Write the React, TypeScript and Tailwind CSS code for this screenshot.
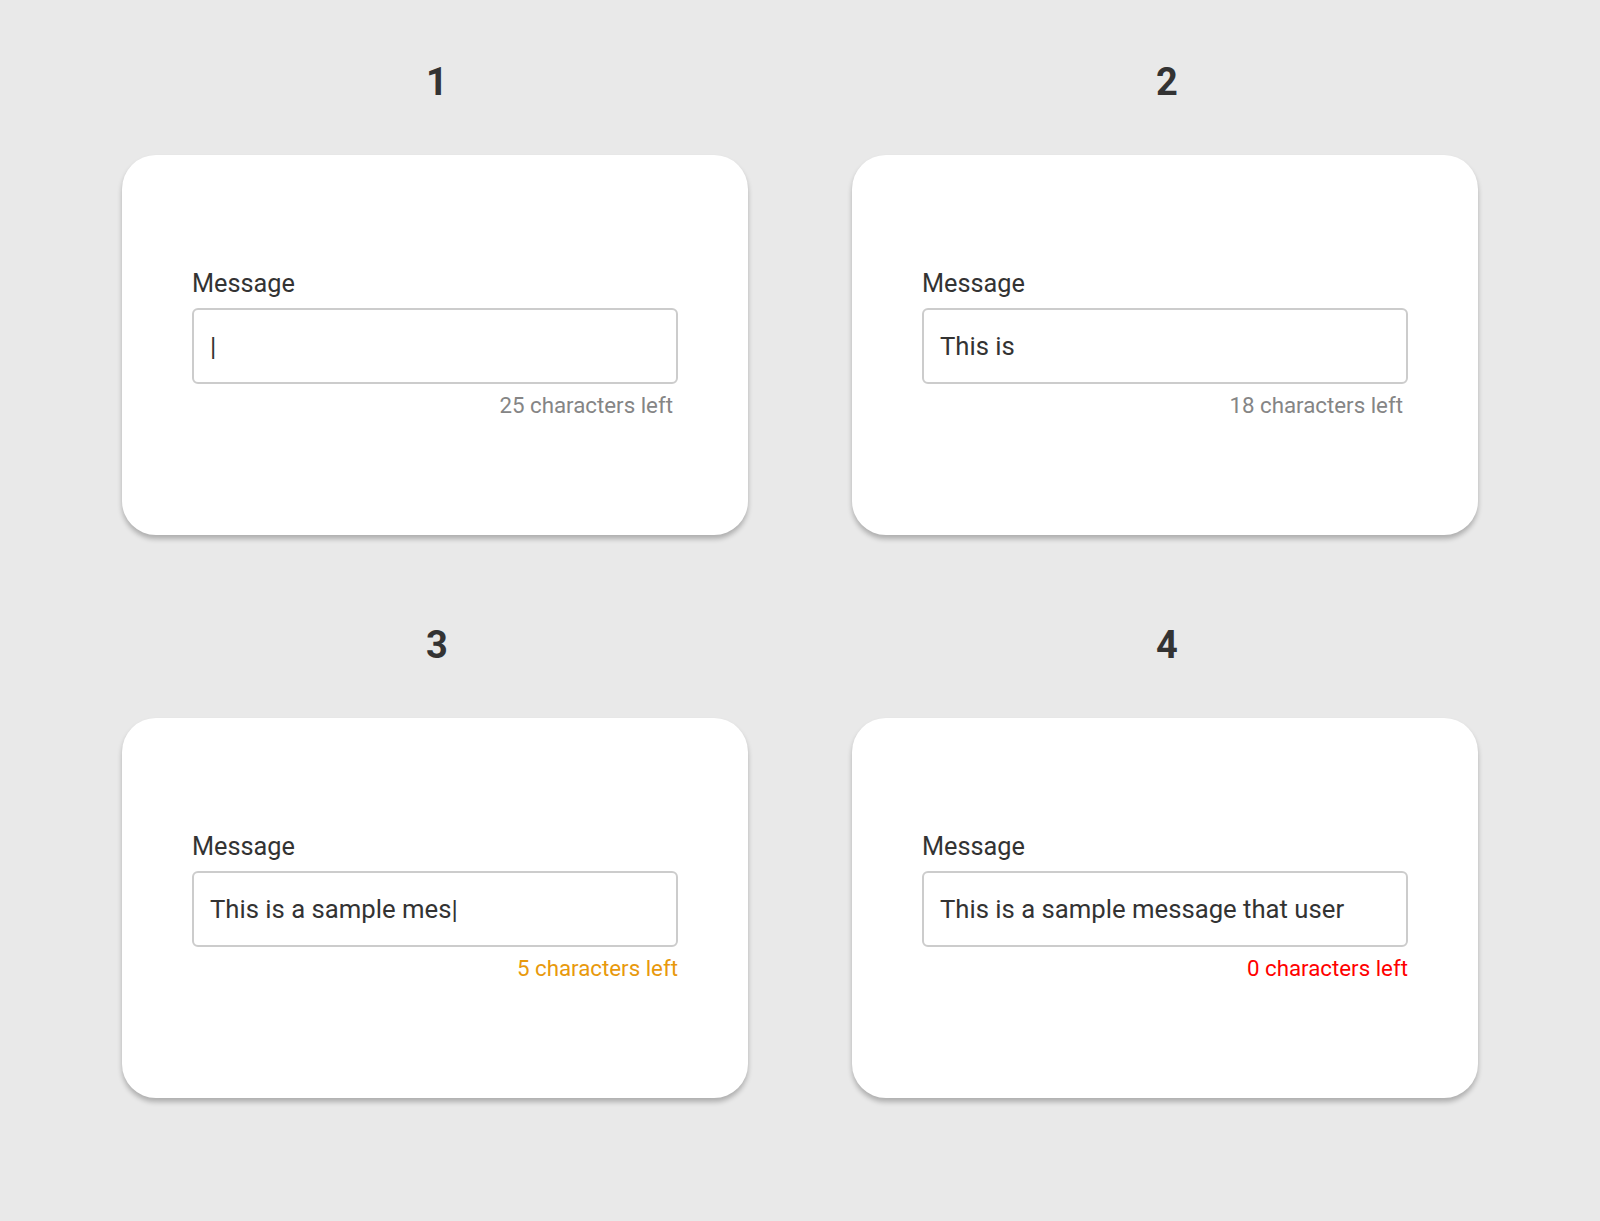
const cards = [
  { n: 1, value: '|', left: '25 characters left', tone: 'text-[#858585] pr-[5px]' },
  { n: 2, value: 'This is', left: '18 characters left', tone: 'text-[#858585] pr-[5px]' },
  { n: 3, value: 'This is a sample mes|', left: '5 characters left', tone: 'text-[#e8990c]' },
  { n: 4, value: 'This is a sample message that user', left: '0 characters left', tone: 'text-[#ff0000]' },
];

function CounterCard({ value, left, tone }: { value: string; left: string; tone: string }) {
  return (
    <div className="h-[380px] w-[626px] rounded-[34px] bg-white shadow-[0_4px_5px_rgba(0,0,0,0.25)] px-[70px] pt-[115px] flex flex-col">
      <label className="text-[25.3px] leading-[28px] text-[#333333]">Message</label>
      <div className="mt-[10px] h-[76px] rounded-[6px] border-2 border-[#cccccc] flex items-center px-[16px] text-[25.7px] text-[#333333] whitespace-nowrap overflow-hidden">
        {value}
      </div>
      <div className={`mt-[8px] text-right text-[22.3px] leading-[26px] ${tone}`}>{left}</div>
    </div>
  );
}

export default function App() {
  return (
    <div
      className="min-h-[1221px] bg-[#e9e9e9] pt-[63px]"
      style={{ fontFamily: 'Roboto, "Noto Sans", sans-serif' }}
    >
      <div className="mx-auto grid w-[1356px] grid-cols-2 gap-x-[104px] gap-y-[91px]">
        {cards.map((c) => (
          <div key={c.n} className="flex flex-col items-center">
            <h2 className="h-[38px] pl-[4px] text-[38px] leading-[38px] font-bold text-[#333333]">{c.n}</h2>
            <div className="mt-[54px]">
              <CounterCard value={c.value} left={c.left} tone={c.tone} />
            </div>
          </div>
        ))}
      </div>
    </div>
  );
}
